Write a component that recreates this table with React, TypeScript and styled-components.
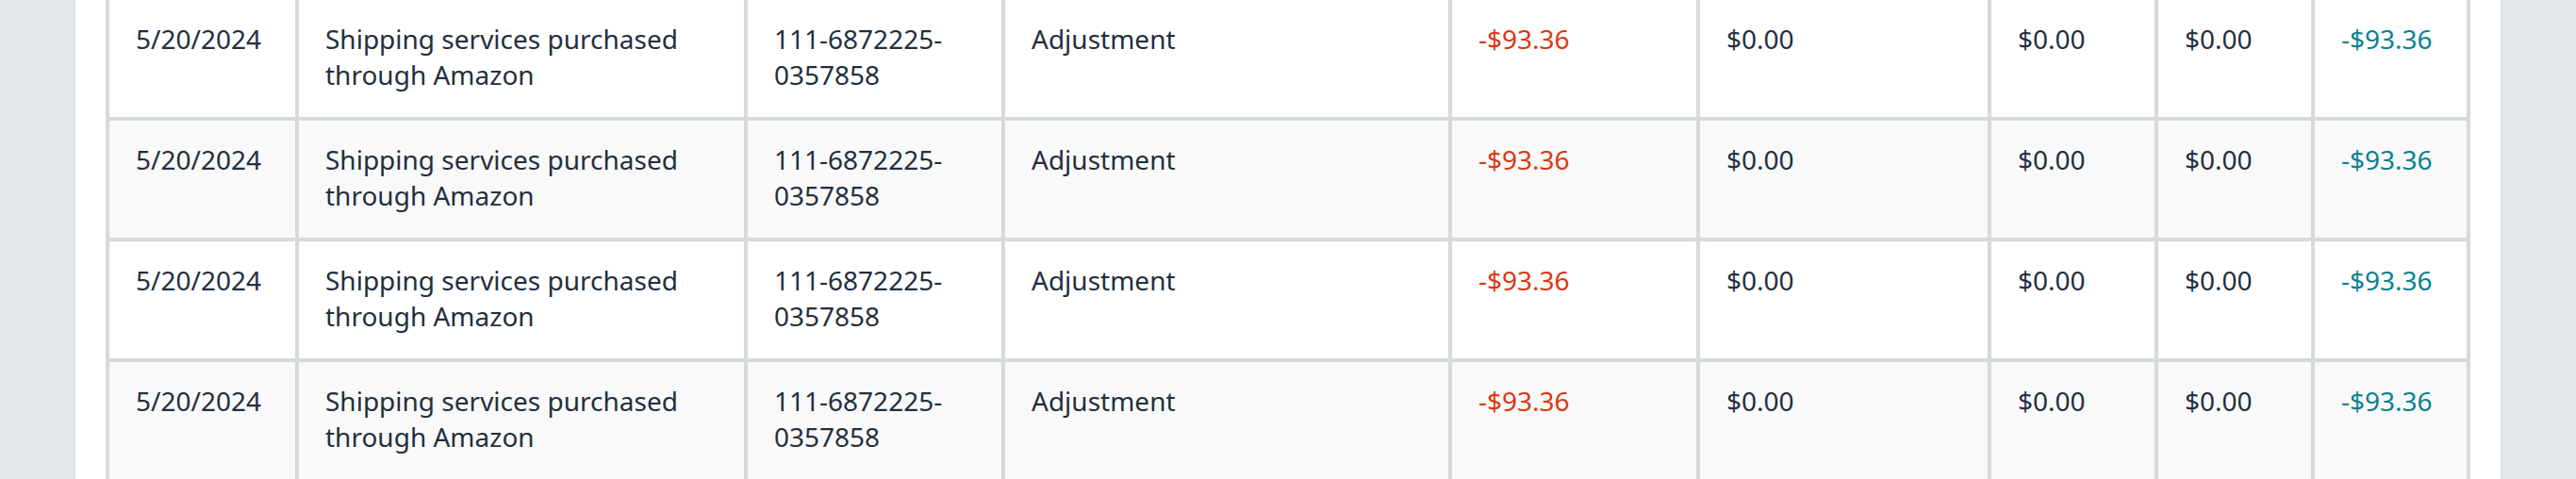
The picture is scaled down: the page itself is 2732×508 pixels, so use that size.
import React from 'react';
import styled, { createGlobalStyle } from 'styled-components';

const GlobalStyle = createGlobalStyle`
  html, body {
    margin: 0;
    padding: 0;
    background: #e3e9ea;
  }
  body {
    font-family: "Noto Sans", "Open Sans", Arial, sans-serif;
    color: #232f3e;
  }
`;

type Tone = 'default' | 'negative' | 'net';

type Transaction = {
  date: string;
  description: string[];
  orderId: string[];
  type: string;
  productCharges: string;
  promotional: string;
  amazonFees: string;
  other: string;
  total: string;
};

const COLUMNS = [197, 472, 269, 470, 259, 305, 173, 162, 161];

const row: Transaction = {
  date: '5/20/2024',
  description: ['Shipping services purchased', 'through Amazon'],
  orderId: ['111-6872225-', '0357858'],
  type: 'Adjustment',
  productCharges: '-$93.36',
  promotional: '$0.00',
  amazonFees: '$0.00',
  other: '$0.00',
  total: '-$93.36',
};

const rows: Transaction[] = [row, row, row, row];

export default function App() {
  return (
    <>
      <GlobalStyle />
      <Page>
        <Panel>
          <Table role="table">
            {rows.map((r, i) => (
              <Row key={i} role="row" $striped={i % 2 === 1}>
                <Cell role="cell">{r.date}</Cell>
                <Cell role="cell">
                  {r.description.map((line) => (
                    <Line key={line}>{line}</Line>
                  ))}
                </Cell>
                <Cell role="cell">
                  {r.orderId.map((line) => (
                    <Line key={line}>{line}</Line>
                  ))}
                </Cell>
                <Cell role="cell">{r.type}</Cell>
                <Cell role="cell" $tone="negative">
                  {r.productCharges}
                </Cell>
                <Cell role="cell">{r.promotional}</Cell>
                <Cell role="cell">{r.amazonFees}</Cell>
                <Cell role="cell">{r.other}</Cell>
                <Cell role="cell" $tone="net">
                  {r.total}
                </Cell>
              </Row>
            ))}
          </Table>
        </Panel>
      </Page>
    </>
  );
}

const Page = styled.div`
  height: 508px;
  padding: 0 80px;
  overflow: hidden;
`;

const Panel = styled.div`
  height: 100%;
  background: #ffffff;
  padding: 0 32px;
  box-shadow: 0 0 3px rgba(0, 0, 0, 0.13);
`;

const Table = styled.div`
  display: flex;
  flex-direction: column;
  gap: 4px;
  padding: 0 4px 4px;
  background: #d5dbdb;
`;

const Row = styled.div<{ $striped?: boolean }>`
  display: grid;
  grid-template-columns: ${COLUMNS.map((w) => `${w}px`).join(' ')};
  column-gap: 4px;

  & > div {
    background: ${(p) => (p.$striped ? '#f9f9f9' : '#ffffff')};
  }
`;

const toneColor: Record<Tone, string> = {
  default: '#232f3e',
  negative: '#dc3712',
  net: '#0a8190',
};

const Cell = styled.div<{ $tone?: Tone }>`
  height: 124px;
  box-sizing: border-box;
  padding: 22px 28px 26px;
  font-size: 28px;
  line-height: 38px;
  color: ${(p) => toneColor[p.$tone ?? 'default']};
  white-space: nowrap;
`;

const Line = styled.span`
  display: block;
`;
